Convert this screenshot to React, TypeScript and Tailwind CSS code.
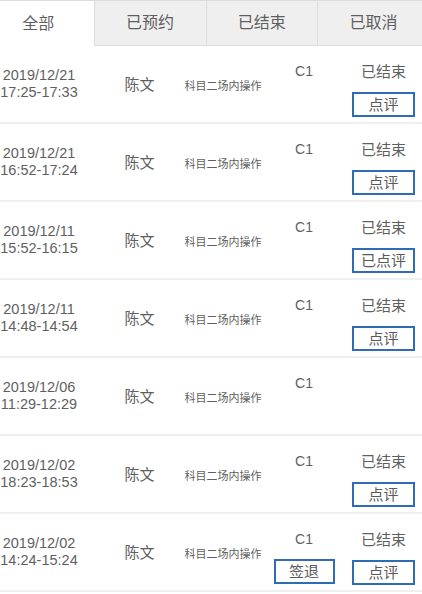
import React from 'react';

type Record = {
  date: string;
  time: string;
  status?: string;
  review?: string;
  signOut?: boolean;
};

const records: Record[] = [
  { date: '2019/12/21', time: '17:25-17:33', status: '已结束', review: '点评' },
  { date: '2019/12/21', time: '16:52-17:24', status: '已结束', review: '点评' },
  { date: '2019/12/11', time: '15:52-16:15', status: '已结束', review: '已点评' },
  { date: '2019/12/11', time: '14:48-14:54', status: '已结束', review: '点评' },
  { date: '2019/12/06', time: '11:29-12:29' },
  { date: '2019/12/02', time: '18:23-18:53', status: '已结束', review: '点评' },
  { date: '2019/12/02', time: '14:24-15:24', status: '已结束', review: '点评', signOut: true },
];

const tabs = ['全部', '已预约', '已结束', '已取消'];

const OutlineButton = ({ label, width }: { label: string; width: string }) => (
  <button
    className={`${width} h-[25px] border-2 border-[#2e6db4] bg-white text-[15px] leading-none text-[#5a5a5a]`}
  >
    {label}
  </button>
);

const App = () => {
  return (
    <div
      className="w-[422px] h-[594px] overflow-hidden bg-white text-[#5f5f5f]"
      style={{ fontFamily: '"Liberation Sans", "Noto Sans CJK SC", sans-serif' }}
    >
      <div className="w-[446px] -ml-[17px]">
        <div className="flex h-[46px] border-t border-[#dcdcdc]">
          {tabs.map((tab, index) => (
            <div
              key={tab}
              className={
                index === 0
                  ? 'flex-1 flex items-center justify-center bg-white text-[16px]'
                  : 'flex-1 flex items-center justify-center bg-[#efefef] border-l border-b border-[#dcdcdc] text-[16px]'
              }
            >
              {tab}
            </div>
          ))}
        </div>

        {records.map((item, index) => (
          <div
            key={index}
            className="grid grid-cols-[112px_89px_78px_84px_75px] h-[78px] border-b-2 border-[#f0f0f0]"
          >
            <div className="flex flex-col items-center justify-center text-[14.5px] leading-[17px] whitespace-nowrap">
              <span>{item.date}</span>
              <span>{item.time}</span>
            </div>
            <div className="flex items-center justify-center pt-[2px] text-[15px]">陈文</div>
            <div className="flex items-center justify-center pt-[4px] text-[11px] whitespace-nowrap">
              科目二场内操作
            </div>
            <div className="flex flex-col items-center pt-[15px] gap-[10px]">
              <span className="text-[14px] leading-[20px]">C1</span>
              {item.signOut && <OutlineButton label="签退" width="w-[61px]" />}
            </div>
            <div className="flex flex-col items-center pt-[16px] gap-[10px]">
              {item.status && <span className="text-[15px] leading-[20px]">{item.status}</span>}
              {item.review && <OutlineButton label={item.review} width="w-[63px]" />}
            </div>
          </div>
        ))}
      </div>
    </div>
  );
};

export default App;
